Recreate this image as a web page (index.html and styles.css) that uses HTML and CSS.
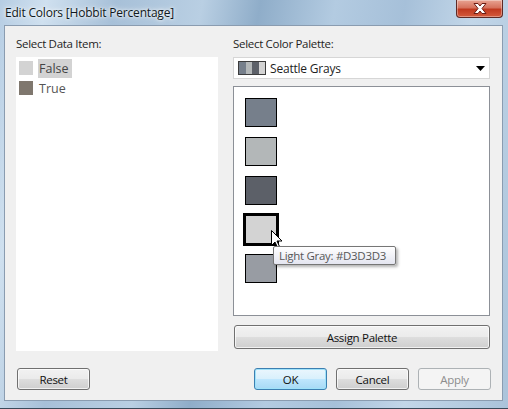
FILE: index.html
```html
<!DOCTYPE html>
<html>
<head>
<meta charset="utf-8">
<link rel="stylesheet" href="styles.css">
</head>
<body>
<div class="window">
  <div class="titlebar">
    <span class="title">Edit Colors [Hobbit Percentage]</span>
    <div class="close">
      <svg width="16" height="11" viewBox="0 0 16 11"><path d="M2 0.5 L6 0.5 L8 3 L10 0.5 L14 0.5 L10 5.5 L14 10.5 L10 10.5 L8 8 L6 10.5 L2 10.5 L6 5.5 Z" fill="#fff" stroke="#6b1c14" stroke-width="1" stroke-linejoin="round"/></svg>
    </div>
  </div>
  <div class="client">
    <div class="columns">
      <div class="col left">
        <div class="label">Select Data Item:</div>
        <div class="list">
          <div class="item"><span class="chip chip-false"></span><span class="item-text selected">False</span></div>
          <div class="item"><span class="chip chip-true"></span><span class="item-text">True</span></div>
        </div>
      </div>
      <div class="col right">
        <div class="label">Select Color Palette:</div>
        <div class="dropdown">
          <span class="pal-icon"><i class="p1"></i><i class="p2"></i><i class="p3"></i><i class="p4"></i></span>
          <span class="dd-text">Seattle Grays</span>
          <svg class="dd-arrow" width="9" height="5" viewBox="0 0 9 5"><path d="M0 0 H9 L4.5 5 Z" fill="#000"/></svg>
        </div>
        <div class="palette">
          <div class="sw sw1"></div>
          <div class="sw sw2"></div>
          <div class="sw sw3"></div>
          <div class="sw sw4 active"></div>
          <div class="sw sw5"></div>
          <svg class="cursor" width="12" height="19" viewBox="0 0 12 19"><path d="M0.5 0.5 L0.5 15.5 L4 12 L6.5 17.5 L8.5 16.5 L6 11 L11 11 Z" fill="#fff" stroke="#000" stroke-width="1" stroke-linejoin="round"/></svg>
          <div class="tooltip">Light Gray: #D3D3D3</div>
        </div>
        <button class="btn assign">Assign Palette</button>
      </div>
    </div>
    <div class="footer">
      <button class="btn small">Reset</button>
      <div class="footer-right">
        <button class="btn small default">OK</button>
        <button class="btn small">Cancel</button>
        <button class="btn small disabled">Apply</button>
      </div>
    </div>
  </div>
</div>
</body>
</html>
```
FILE: styles.css
```css
* { box-sizing: border-box; }
html, body { margin: 0; padding: 0; }
body {
  width: 508px;
  height: 409px;
  overflow: hidden;
  font-family: "Open Sans", "Noto Sans", "Liberation Sans", sans-serif;
  font-size: 11.5px;
  letter-spacing: -0.3px;
  color: #1e1e1e;
}
.window {
  width: 508px;
  height: 409px;
  background: linear-gradient(100deg, #b6cde3 0%, #cfe0ef 8%, #a7c0d8 20%, #b9cfe3 35%, #8fadc9 45%, #b3cbe1 58%, #a6c0d9 70%, #c2d6e8 82%, #aac3da 100%);
  display: flex;
  flex-direction: column;
  border-bottom: 1px solid #3a4a5a;
}
.titlebar {
  height: 25px;
  position: relative;
  display: flex;
  align-items: center;
  padding-left: 5px;
}
.title {
  font-size: 12px;
  letter-spacing: -0.2px;
  color: #101820;
  text-shadow: 0 0 6px #ffffff, 0 0 3px #ffffff;
  margin-top: -1px;
}
.close {
  position: absolute;
  left: 456px;
  top: 0;
  width: 47px;
  height: 18px;
  border: 1px solid #5e2a25;
  border-top: none;
  border-radius: 0 0 4px 4px;
  background: linear-gradient(#e8a493 0%, #d6725d 45%, #c0391f 55%, #d45a3c 100%);
  box-shadow: inset 0 0 0 1px rgba(255,255,255,0.35);
  display: flex;
  align-items: center;
  justify-content: center;
}
.client {
  flex: 1;
  margin: 0 5px 7px 4px;
  background: #f0f0f0;
  border: 1px solid #8a9cb0;
  display: flex;
  flex-direction: column;
  padding: 9px 12px 0 11px;
}
.columns {
  display: flex;
  gap: 15px;
}
.col { display: flex; flex-direction: column; }
.left { width: 202px; }
.right { width: 257px; }
.label {
  height: 22px;
  line-height: 18px;
  color: #1e1e1e;
}
.list {
  background: #fff;
  height: 294px;
  padding-top: 1px;
}
.item {
  display: flex;
  align-items: center;
  height: 20px;
  padding-left: 3px;
}
.chip {
  width: 14px;
  height: 14px;
  margin-right: 5px;
}
.chip-false { background: #d3d3d3; }
.chip-true { background: #7f776e; }
.item-text {
  color: #555;
  font-size: 12.5px;
  letter-spacing: 0;
  line-height: 19px;
  padding: 0 3px 0 1px;
}
.item-text.selected { background: #d3d3d3; color: #444; }
.dropdown {
  height: 22px;
  background: #fff;
  border: 1px solid #d6d6d6;
  display: flex;
  align-items: center;
  padding-left: 4px;
  position: relative;
}
.pal-icon {
  display: flex;
  width: 28px;
  height: 14px;
  border: 1px solid #3c3c3c;
  margin-right: 4px;
}
.pal-icon i { flex: 1; display: block; }
.p1 { background: #767f8b; }
.p2 { background: #b3b7b8; }
.p3 { background: #5c6068; }
.p4 { background: #d3d3d3; }
.dd-text { font-size: 12px; letter-spacing: -0.2px; color: #1e1e1e; }
.dd-arrow { position: absolute; right: 4px; top: 8px; }
.palette {
  margin-top: 7px;
  height: 230px;
  background: #fff;
  border: 1px solid #8c9097;
  position: relative;
  padding: 11px 0 0 11px;
  display: flex;
  flex-direction: column;
  gap: 10px;
}
.sw {
  width: 32px;
  height: 29px;
  border: 1px solid #000;
}
.sw1 { background: #767f8b; }
.sw2 { background: #b3b7b8; }
.sw3 { background: #5c6068; }
.sw4 { background: #d3d3d3; }
.sw5 { background: #989ca3; }
.sw.active {
  border: 3px solid #000;
  width: 36px;
  height: 33px;
  margin: -2px 0 -2px -2px;
}
.cursor {
  position: absolute;
  left: 37px;
  top: 143px;
}
.tooltip {
  position: absolute;
  left: 39px;
  top: 159px;
  width: 123px;
  height: 19px;
  border: 1px solid #767676;
  border-radius: 2px;
  background: linear-gradient(#ffffff, #e4e5f0);
  box-shadow: 2px 2px 3px rgba(0,0,0,0.3);
  color: #575757;
  font-size: 11.5px;
  line-height: 17px;
  padding-left: 5px;
  white-space: nowrap;
}
.btn {
  font-family: "Open Sans", "Noto Sans", "Liberation Sans", sans-serif;
  font-size: 11.5px;
  letter-spacing: -0.3px;
  color: #111;
  border: 1px solid #707070;
  border-radius: 3px;
  background: linear-gradient(#f2f2f2 0%, #ebebeb 48%, #dddddd 52%, #cfcfcf 100%);
  box-shadow: inset 0 0 0 1px rgba(255,255,255,0.7);
  padding: 0;
  margin: 0;
}
.assign {
  margin-top: 9px;
  height: 24px;
  width: 256px;
  margin-left: 1px;
}
.footer {
  display: flex;
  justify-content: space-between;
  margin-top: 17px;
  padding-left: 1px;
}
.footer-right { display: flex; gap: 9px; margin-right: -1px; }
.btn.small {
  width: 73px;
  height: 22px;
}
.btn.default {
  border-color: #3c7fb1;
  background: linear-gradient(#eaf6fd 0%, #d9f0fc 48%, #bee6fd 52%, #a7d9f5 100%);
  box-shadow: inset 0 0 0 1px #9fe2fa;
}
.btn.disabled {
  color: #8d8d8d;
  border-color: #adb2b5;
  background: #f4f4f4;
  box-shadow: none;
}
```
